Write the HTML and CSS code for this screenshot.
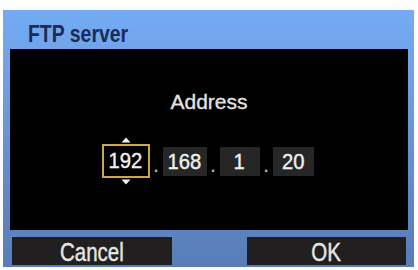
FILE: index.html
```html
<!DOCTYPE html>
<html>
<head>
<meta charset="utf-8">
<link rel="stylesheet" href="styles.css">
</head>
<body>
<div class="panel">
  <div class="title"><span class="narrow">FTP server</span></div>
  <div class="screen">
    <div class="label">Address</div>
    <div class="ip">
      <div class="field active">
        <svg class="arrow up" width="10" height="6" viewBox="0 0 10 6"><path d="M5 0.5 L9.5 5.5 L0.5 5.5 Z" fill="#f2f2f2"/></svg>
        <span class="num">192</span>
        <svg class="arrow down" width="10" height="6" viewBox="0 0 10 6"><path d="M0.5 0.5 L9.5 0.5 L5 5.5 Z" fill="#f2f2f2"/></svg>
      </div>
      <span class="dot">.</span>
      <div class="field"><span class="num">168</span></div>
      <span class="dot">.</span>
      <div class="field"><span class="num">1</span></div>
      <span class="dot">.</span>
      <div class="field"><span class="num">20</span></div>
    </div>
  </div>
  <div class="buttons">
    <div class="btn"><span class="narrow">Cancel</span></div>
    <div class="btn"><span class="narrow">OK</span></div>
  </div>
</div>
</body>
</html>
```
FILE: styles.css
```css
html, body {
  margin: 0;
  padding: 0;
  background: #fdfdfd;
}
body {
  width: 418px;
  height: 270px;
  overflow: hidden;
}
.panel {
  margin: 10px 4px 0 3px;
  width: 411px;
  height: 257px;
  background: linear-gradient(to bottom, #74abf3 0%, #6d9fe2 30%, #5f86c2 75%, #5a7db6 100%);
  display: flex;
  flex-direction: column;
}
.narrow {
  display: inline-block;
  transform: scaleX(0.84);
}
.title {
  height: 39px;
  box-sizing: border-box;
  padding: 12px 0 0 25px;
  font-family: "Liberation Sans", sans-serif;
  font-weight: bold;
  font-size: 24px;
  line-height: 24px;
  color: #1b2b55;
}
.title .narrow {
  transform-origin: left center;
  transform: scaleX(0.81);
}
.screen {
  margin: 0 6px 0 7px;
  height: 181px;
  background: #000;
  display: flex;
  flex-direction: column;
  align-items: center;
}
.label {
  margin-top: 41px;
  font-family: "Liberation Sans", sans-serif;
  font-size: 21px;
  line-height: 24px;
  color: #e4e4e4;
  -webkit-text-stroke: 0.3px #e4e4e4;
}
.ip {
  margin-top: 30px;
  display: flex;
  align-items: flex-end;
  font-family: "Liberation Sans", sans-serif;
  font-size: 22px;
  color: #f0f0f0;
  margin-left: -3px;
}
.num {
  display: inline-block;
  transform: scaleX(0.92);
  -webkit-text-stroke: 0.4px #f0f0f0;
}
.field {
  height: 29px;
  line-height: 30px;
  background: #262626;
  text-align: center;
  box-sizing: border-box;
}
.field:nth-of-type(2) { width: 44px; }
.field:nth-of-type(3) { width: 40px; }
.field:nth-of-type(4) { width: 41px; }
.field.active {
  position: relative;
  width: 48px;
  height: 34px;
  line-height: 30px;
  background: #000;
  border: 2px solid #c9a84e;
  margin-bottom: -2px;
}
.arrow {
  position: absolute;
  left: 17px;
  display: block;
}
.arrow.up { top: -9px; }
.arrow.down { bottom: -9px; }
.dot {
  width: 13px;
  text-align: center;
  line-height: 22px;
  color: #bbbbbb;
}
.buttons {
  margin-top: 7px;
  height: 28px;
  display: flex;
  justify-content: space-between;
  padding: 0 8px 0 9px;
}
.btn {
  width: 160px;
  background: #221f20;
  text-align: center;
  font-family: "Liberation Sans", sans-serif;
  font-size: 25px;
  line-height: 30px;
  color: #e6e6e6;
  -webkit-text-stroke: 0.4px #e6e6e6;
}
.btn + .btn { width: 159px; }
.btn .narrow { transform: scaleX(0.82); }
```
